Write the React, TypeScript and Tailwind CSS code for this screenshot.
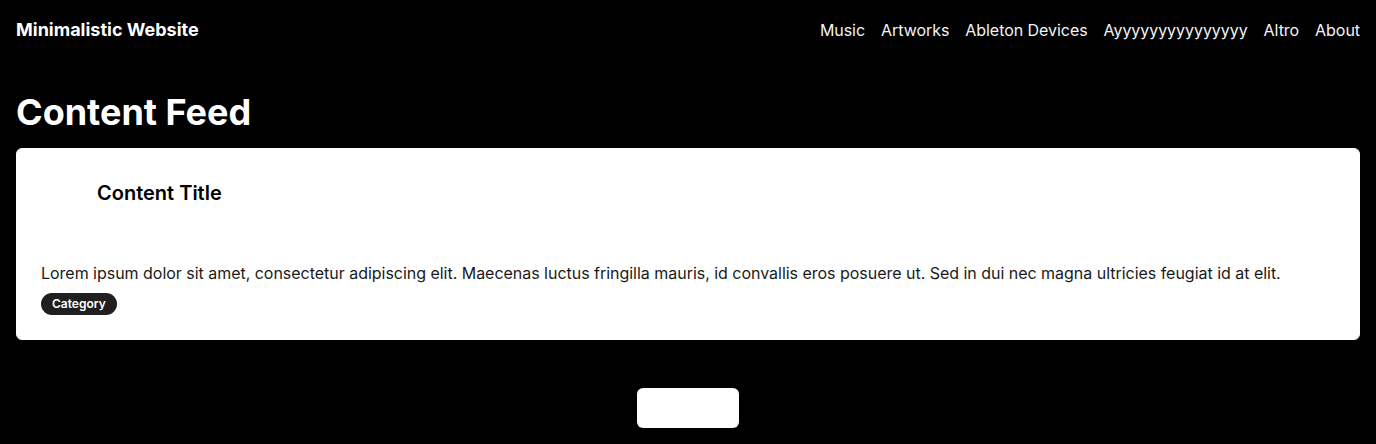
import React from 'react';

const navLinks = ['Music', 'Artworks', 'Ableton Devices', 'Ayyyyyyyyyyyyyyy', 'Altro', 'About'];

function Header() {
  return (
    <header className="flex items-center justify-between px-4 py-4">
      <div className="text-lg font-bold leading-7 text-white">Minimalistic Website</div>
      <nav className="flex items-center gap-4">
        {navLinks.map((link) => (
          <a key={link} href="#" className="text-base leading-7 tracking-[-0.05px] text-gray-100">
            {link}
          </a>
        ))}
      </nav>
    </header>
  );
}

function ContentCard() {
  return (
    <div className="rounded-md border border-white bg-white p-6">
      <div className="flex items-center gap-4">
        {/* image placeholder, nothing loaded */}
        <div className="h-10 w-10 shrink-0" />
        <h2 className="text-xl font-semibold leading-7 text-black">Content Title</h2>
      </div>
      <p className="mt-12 text-base leading-6 tracking-[-0.025px] text-[#1a1a1a]">
        Lorem ipsum dolor sit amet, consectetur adipiscing elit. Maecenas luctus fringilla mauris, id convallis eros posuere ut. Sed in dui nec magna ultricies feugiat id at elit.
      </p>
      <div className="mt-2 flex">
        <span className="rounded-full bg-[#1f1f1f] px-[11px] py-[3px] text-xs font-semibold leading-4 text-white">
          Category
        </span>
      </div>
    </div>
  );
}

export default function App() {
  return (
    <div className="min-h-[444px] bg-black font-['Inter',sans-serif]">
      <Header />
      <main className="px-4 pt-8">
        <h1 className="mb-4 text-4xl font-bold leading-10 text-white">Content Feed</h1>
        <ContentCard />
        <div className="mt-12 flex justify-center">
          <button className="h-10 w-[102px] rounded-md bg-white" />
        </div>
      </main>
    </div>
  );
}
